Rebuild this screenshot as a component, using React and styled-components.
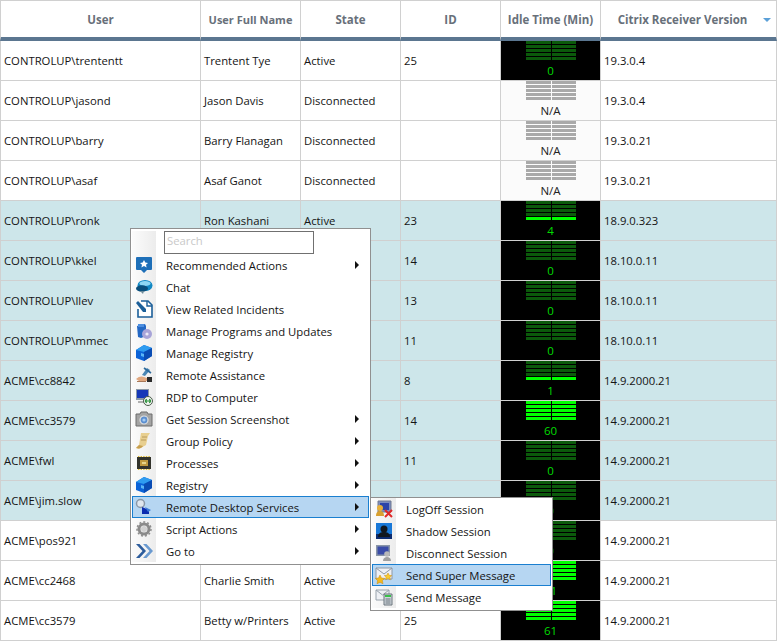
import React from "react";
import styled, { createGlobalStyle } from "styled-components";

const Global = createGlobalStyle`
  html, body { margin: 0; padding: 0; background: #fff; }
  body { font-family: "Open Sans", "Noto Sans", "Liberation Sans", sans-serif; font-size: 11.3px; color: #141414; overflow: hidden; }
`;

const Page = styled.div`
  position: relative;
  width: 777px;
  height: 641px;
  overflow: hidden;
`;

const COLUMNS = "201px 100px 100px 100px 100px 176px";

const HeaderRow = styled.div`
  display: grid;
  grid-template-columns: ${COLUMNS};
  height: 41px;
  box-sizing: border-box;
  border-top: 1px solid #d0d0d0;
  background: #fff;
`;

const HeaderCell = styled.div`
  position: relative;
  display: flex;
  align-items: center;
  justify-content: center;
  box-sizing: border-box;
  border-right: 1px solid #d0d0d0;
  border-left: ${(p) => (p.$first ? "1px solid #d0d0d0" : "0")};
  border-bottom: 4px solid #5b7690;
  padding: ${(p) => (p.$sorted ? "0 12px 0 0" : "0")};
  font-weight: 700;
  font-size: ${(p) => (p.$narrow ? "11px" : "11.5px")};
  color: #68707a;
  white-space: nowrap;
`;

const SortArrow = styled.span`
  position: absolute;
  right: 5px;
  top: 17px;
  width: 0;
  height: 0;
  border-left: 4px solid transparent;
  border-right: 4px solid transparent;
  border-top: 4px solid #5ba0d8;
`;

const Row = styled.div`
  display: grid;
  grid-template-columns: ${COLUMNS};
  height: 40px;
  box-sizing: border-box;
  background: ${(p) => (p.$teal ? "#cde6ea" : "#fff")};
`;

const Cell = styled.div`
  display: flex;
  align-items: center;
  box-sizing: border-box;
  padding-left: 3px;
  border-right: 1px solid #d0d0d0;
  border-bottom: 1px solid #d0d0d0;
  border-left: ${(p) => (p.$first ? "1px solid #d0d0d0" : "0")};
  white-space: nowrap;
  overflow: hidden;
`;

const GaugeCell = styled.div`
  display: flex;
  flex-direction: column;
  align-items: center;
  box-sizing: border-box;
  border-right: 1px solid #d0d0d0;
  border-bottom: 1px solid #d0d0d0;
  background: ${(p) => (p.$na ? "#fbfbfb" : "#000")};
  color: ${(p) => (p.$na ? "#222" : "#00dc00")};
`;

const Bars = styled.div`
  display: grid;
  grid-template-columns: 25px 24px;
  column-gap: 1px;
  row-gap: 1px;
  margin-bottom: 3px;
`;

const Bar = styled.div`
  height: 3px;
  background: ${(p) => p.$color};
`;

const GaugeLabel = styled.div`
  line-height: 16px;
  font-size: 11.5px;
`;

const Menu = styled.div`
  position: absolute;
  left: ${(p) => p.$left}px;
  top: ${(p) => p.$top}px;
  width: ${(p) => p.$width}px;
  box-sizing: border-box;
  padding: ${(p) => p.$paddingTop}px 1px 2px 1px;
  background:
    linear-gradient(90deg, #fbfbfb 0, #ececec 24px, #fff 24px) left / 100% 100% no-repeat;
  background-origin: content-box;
  background-color: #fff;
  border: 1px solid #909090;
  font-size: 11.3px;
  color: #141414;
`;

const SearchBox = styled.div`
  box-sizing: border-box;
  width: 150px;
  height: 23px;
  margin: 0 0 0 32px;
  padding: 0 2px;
  background: #fff;
  border: 1px solid #707070;
  color: #c9c9c9;
  line-height: 18px;
`;

const Item = styled.div`
  display: flex;
  align-items: center;
  height: 22px;
  box-sizing: border-box;
  border: 1px solid ${(p) => (p.$active ? "#1a7fd0" : "transparent")};
  background: ${(p) => (p.$active ? "#b6d6f2" : "transparent")};
  white-space: nowrap;
`;

const IconSlot = styled.span`
  display: flex;
  align-items: center;
  justify-content: center;
  width: 21px;
  height: 20px;
  margin-right: 12px;
  flex: none;
`;

const Label = styled.span`
  flex: 1;
`;

const Chevron = styled.span`
  width: 0;
  height: 0;
  margin-right: 9px;
  border-top: 4px solid transparent;
  border-bottom: 4px solid transparent;
  border-left: 4px solid #111;
`;

const Svg = ({ children }) => (
  <svg width="18" height="18" viewBox="0 0 18 18">{children}</svg>
);

const icons = {
  star: (
    <Svg>
      <path d="M2 1h14a1 1 0 0 1 1 1v11a1 1 0 0 1-1 1h-4l-3 3-3-3H2a1 1 0 0 1-1-1V2a1 1 0 0 1 1-1z" fill="#1e6fb8" />
      <path d="M9 4l1.300 2.600 2.700.3-2 1.900.6 2.700L9 10.100l-2.600 1.400.6-2.700-2-1.900 2.700-.3z" fill="#fff" />
    </Svg>
  ),
  chat: (
    <Svg>
      <ellipse cx="10" cy="7.500" rx="7.500" ry="5.500" fill="#1288c4" />
      <ellipse cx="10" cy="5.500" rx="5.500" ry="2.600" fill="#8fd8f4" />
      <ellipse cx="7" cy="10.500" rx="6" ry="3.200" fill="#0a4f7c" />
      <path d="M5 13l3 3 1-3z" fill="#6a8a9a" />
    </Svg>
  ),
  incident: (
    <Svg>
      <path d="M6 1h7l4 4v12H3V9" fill="#fff" stroke="#1c5f99" strokeWidth="1.600" />
      <path d="M1 3l2-2 8 8v3H8z" fill="#1c5f99" />
      <path d="M12 1v5h5" fill="none" stroke="#1c5f99" strokeWidth="1.400" />
    </Svg>
  ),
  programs: (
    <Svg>
      <path d="M2 4l8-2 1 2v10l-5 2-3-1z" fill="#2468c4" />
      <path d="M3 2h6v3H3z" fill="#4c8ee0" />
      <circle cx="12" cy="12" r="5" fill="#a8a4d8" />
      <circle cx="12" cy="12" r="1.600" fill="#eceaf8" />
    </Svg>
  ),
  cube: (
    <Svg>
      <path d="M1 6l8-5 8 3v8l-8 5-8-3z" fill="#0c63d8" />
      <path d="M1 6l8-5 8 3-8 4z" fill="#2f9cf0" />
      <path d="M9 8l8-4v8l-8 5z" fill="#0a4cb4" />
      <path d="M6 9l3 1v3l-3-1z" fill="#5bb6f6" />
    </Svg>
  ),
  assist: (
    <Svg>
      <path d="M7 9l5-7 3 2-5 6z" fill="#4a86b4" />
      <path d="M9 2l7 5" stroke="#2c6a9c" strokeWidth="1.600" />
      <path d="M1 13c3-3 6-3 8-2l3 1v3H4z" fill="#e0a880" />
      <path d="M12 11h5v5h-5z" fill="#2a2a2a" />
      <path d="M2 15h9v1H2z" fill="#a87858" />
    </Svg>
  ),
  rdp: (
    <Svg>
      <path d="M1 1h13v11H1z" fill="#8a98a8" />
      <path d="M2 2h11v8H2z" fill="#1638b8" />
      <path d="M3 13h9v2H3z" fill="#b0b0b0" />
      <circle cx="13" cy="13" r="4.500" fill="#f0f4f0" stroke="#4a5a4a" />
      <path d="M10.500 13h5M11.500 11l-1 2 1 2M14.500 11l1 2-1 2" stroke="#1c8a2c" fill="none" strokeWidth="1.200" />
    </Svg>
  ),
  camera: (
    <Svg>
      <path d="M1 4h4l1-2h6l1 2h4v12H1z" fill="#a4a4a4" stroke="#6c6c6c" />
      <circle cx="9" cy="10" r="4" fill="#5c8fd0" stroke="#e0e0e0" strokeWidth="1.200" />
      <circle cx="9" cy="10" r="1.600" fill="#a6cdf4" />
    </Svg>
  ),
  scroll: (
    <Svg>
      <path d="M6 1h9l-2 3-2 9-7 4-3-1 3-3z" fill="#e8cf90" />
      <path d="M1 16c3 1 6 0 7-2l-4-1z" fill="#c8a050" />
      <path d="M7 5h5M6 8h5" stroke="#b89a5c" />
    </Svg>
  ),
  chip: (
    <Svg>
      <path d="M2 3h14v12H2z" fill="#33332c" />
      <path d="M5 6h8v6H5z" fill="#c09a40" />
      <path d="M7 8h4v2H7z" fill="#e6d48c" />
      <path d="M3 2.500h12M3 15.500h12" stroke="#e2b92c" strokeWidth="1.200" strokeDasharray="1.400 1.200" />
    </Svg>
  ),
  rds: (
    <Svg>
      <circle cx="5.500" cy="5.500" r="4" fill="#dfe6ee" stroke="#8a98a8" strokeWidth="1.500" />
      <path d="M7 9l7 3v4H7z" fill="#0c2cb0" />
      <path d="M10 9l6 3-3 2z" fill="#3c7cd8" />
    </Svg>
  ),
  gear: (
    <Svg>
      <circle cx="9" cy="9" r="5" fill="none" stroke="#8a8a8a" strokeWidth="3" />
      <circle cx="9" cy="9" r="7" fill="none" stroke="#8c8c8c" strokeWidth="1.500" strokeDasharray="2 2" />
      <circle cx="9" cy="9" r="3" fill="#d0d0d0" />
    </Svg>
  ),
  goto: (
    <Svg>
      <path d="M1 2h3.500L11 9l-6.500 7H1l6.500-7z" fill="#2c5c9c" />
      <path d="M8 2h3.500L18 9l-6.500 7H8l6.500-7z" fill="#6a9ad0" />
    </Svg>
  ),
  logoff: (
    <Svg>
      <path d="M3 1h13v11H3z" fill="#7c8cc0" stroke="#707a90" />
      <path d="M5 3h9v7H5z" fill="#2c44a8" />
      <circle cx="5" cy="8" r="3" fill="#e8b038" />
      <path d="M1 16c0-4 2-5 4-5s4 1 4 5z" fill="#d8a030" />
      <path d="M10 10l7 7M17 10l-7 7" stroke="#e02828" strokeWidth="2" />
    </Svg>
  ),
  shadow: (
    <Svg>
      <path d="M1 1h16v16H1z" fill="#1878d8" />
      <path d="M1 12h16v5H1z" fill="#0c2c70" />
      <circle cx="9" cy="7" r="3.500" fill="#101820" />
      <path d="M3 15c0-4 3-5 6-5s6 1 6 5z" fill="#101820" />
    </Svg>
  ),
  disconnect: (
    <Svg>
      <path d="M1 1h14v11H1z" fill="#8a96a8" />
      <path d="M2.500 2.500h11v8h-11z" fill="#3a4ca8" />
      <circle cx="12" cy="10" r="2.800" fill="#b8b8b8" />
      <path d="M8 17c0-3 2-4 4-4s4 1 4 4z" fill="#a0a0a0" />
    </Svg>
  ),
  superMsg: (
    <Svg>
      <path d="M1 2h16v11H1z" fill="#eef0f4" stroke="#8e98a4" />
      <path d="M1 2l8 6 8-6" fill="none" stroke="#8e98a4" />
      <path d="M5 9l1.500 3 3.200.4-2.300 2.200.6 3.200L5 16.300 2 17.800l.6-3.200L.3 12.400l3.200-.4z" fill="#f4b81c" stroke="#c88a10" strokeWidth=".5" />
      <path d="M13 7l1.200 2.300 2.500.3-1.800 1.700.4 2.500-2.300-1.200-2.300 1.200.4-2.500-1.800-1.700 2.500-.3z" fill="#f8cc30" stroke="#c88a10" strokeWidth=".5" />
    </Svg>
  ),
  sendMsg: (
    <Svg>
      <path d="M1 2h13v10H1z" fill="#eef0f4" stroke="#98a2ac" />
      <path d="M1 2l6.500 5 6.500-5" fill="none" stroke="#98a2ac" />
      <path d="M9 6h8v11H9z" fill="#cfd6dc" stroke="#6a747c" />
      <path d="M10 7h6v2h-6z" fill="#38c048" />
      <path d="M10.500 11h5M10.500 13h5M10.500 15h5" stroke="#6a747c" />
    </Svg>
  ),
};

const rows = [
  { u: "CONTROLUP\\trententt", n: "Trentent Tye", s: "Active", id: "25", g: 0, v: "19.3.0.4" },
  { u: "CONTROLUP\\jasond", n: "Jason Davis", s: "Disconnected", id: "", g: null, v: "19.3.0.4" },
  { u: "CONTROLUP\\barry", n: "Barry Flanagan", s: "Disconnected", id: "", g: null, v: "19.3.0.21" },
  { u: "CONTROLUP\\asaf", n: "Asaf Ganot", s: "Disconnected", id: "", g: null, v: "19.3.0.21" },
  { u: "CONTROLUP\\ronk", n: "Ron Kashani", s: "Active", id: "23", g: 4, v: "18.9.0.323", t: 1 },
  { u: "CONTROLUP\\kkel", n: "", s: "", id: "14", g: 0, v: "18.10.0.11", t: 1 },
  { u: "CONTROLUP\\llev", n: "", s: "", id: "13", g: 0, v: "18.10.0.11", t: 1 },
  { u: "CONTROLUP\\mmec", n: "", s: "", id: "11", g: 0, v: "18.10.0.11", t: 1 },
  { u: "ACME\\cc8842", n: "", s: "", id: "8", g: 1, v: "14.9.2000.21", t: 1 },
  { u: "ACME\\cc3579", n: "", s: "", id: "14", g: 60, v: "14.9.2000.21", t: 1 },
  { u: "ACME\\fwl", n: "", s: "", id: "11", g: 0, v: "14.9.2000.21", t: 1 },
  { u: "ACME\\jim.slow", n: "", s: "", id: "", g: 0, v: "14.9.2000.21", t: 1 },
  { u: "ACME\\pos921", n: "", s: "", id: "", g: 0, v: "14.9.2000.21" },
  { u: "ACME\\cc2468", n: "Charlie Smith", s: "Active", id: "", g: 61, v: "14.9.2000.21" },
  { u: "ACME\\cc3579", n: "Betty w/Printers", s: "Active", id: "25", g: 61, v: "14.9.2000.21" },
];

const headers = ["User", "User Full Name", "State", "ID", "Idle Time (Min)", "Citrix Receiver Version"];

const mainItems = [
  ["star", "Recommended Actions", true],
  ["chat", "Chat"],
  ["incident", "View Related Incidents"],
  ["programs", "Manage Programs and Updates"],
  ["cube", "Manage Registry"],
  ["assist", "Remote Assistance"],
  ["rdp", "RDP to Computer"],
  ["camera", "Get Session Screenshot", true],
  ["scroll", "Group Policy", true],
  ["chip", "Processes", true],
  ["cube", "Registry", true],
  ["rds", "Remote Desktop Services", true, true],
  ["gear", "Script Actions", true],
  ["goto", "Go to", true],
];

const subItems = [
  ["logoff", "LogOff Session"],
  ["shadow", "Shadow Session"],
  ["disconnect", "Disconnect Session"],
  ["superMsg", "Send Super Message", false, true],
  ["sendMsg", "Send Message"],
];

function barColor(level, g) {
  if (g === null) return "#a9a9a9";
  const lit = g >= 60 ? 5 : g > 0 && level === 4 ? 1 : 0;
  return 4 - level < lit ? "#00ff00" : "#0b5a0b";
}

function Gauge({ g }) {
  return (
    <GaugeCell $na={g === null}>
      <Bars>
        {[0, 1, 2, 3, 4].flatMap((l) => [
          <Bar key={`${l}a`} $color={barColor(l, g)} />,
          <Bar key={`${l}b`} $color={barColor(l, g)} />,
        ])}
      </Bars>
      <GaugeLabel>{g === null ? "N/A" : g}</GaugeLabel>
    </GaugeCell>
  );
}

function MenuItems({ items }) {
  return items.map(([icon, label, sub, active]) => (
    <Item key={label} $active={active}>
      <IconSlot>{icons[icon]}</IconSlot>
      <Label>{label}</Label>
      {sub && <Chevron />}
    </Item>
  ));
}

export default function App() {
  return (
    <Page>
      <Global />
      <HeaderRow>
        {headers.map((h, i) => (
          <HeaderCell key={h} $first={i === 0} $sorted={i === 5} $narrow={i === 1}>
            {h}
            {i === 5 && <SortArrow />}
          </HeaderCell>
        ))}
      </HeaderRow>
      {rows.map((r, i) => (
        <Row key={i} $teal={r.t}>
          <Cell $first>{r.u}</Cell>
          <Cell>{r.n}</Cell>
          <Cell>{r.s}</Cell>
          <Cell>{r.id}</Cell>
          <Gauge g={r.g} />
          <Cell>{r.v}</Cell>
        </Row>
      ))}
      <Menu $left={130} $top={228} $width={241} $paddingTop={2}>
        <SearchBox>Search</SearchBox>
        <MenuItems items={mainItems} />
      </Menu>
      <Menu $left={370} $top={497} $width={183} $paddingTop={0}>
        <MenuItems items={subItems} />
      </Menu>
    </Page>
  );
}
